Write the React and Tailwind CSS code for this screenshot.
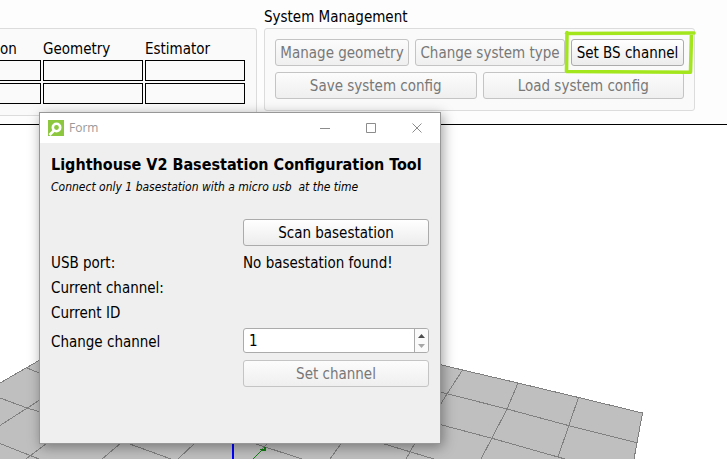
import { useState } from "react";

const BUTTON =
  "h-[27px] rounded-[3px] border border-[#ababab] bg-linear-to-b from-white to-[#ececec] pt-0.5 text-center leading-[23px] whitespace-nowrap text-black disabled:border-[#c4c4c4] disabled:from-[#fcfcfc] disabled:to-[#efefef] disabled:text-[#787878]";

function StatusTable() {
  const cell = "h-[21px] border border-black p-0";
  return (
    <div className="h-[88px] w-[257px] shrink-0 rounded-tr-[3px] rounded-br-[3px] border border-l-0 border-[#dcdcdc] bg-[#fafafa] pt-[9px]">
      <table className="-mt-0.5 w-[247px] table-fixed border-separate border-spacing-x-0.5 border-spacing-y-0.5 -ml-0.5">
        <colgroup>
          <col className="w-[41px]" />
          <col className="w-[100px]" />
          <col className="w-[100px]" />
        </colgroup>
        <thead>
          <tr className="h-5 text-left leading-[18px]">
            <th className="p-0 pt-0.5 font-normal">on</th>
            <th className="p-0 pt-0.5 font-normal">Geometry</th>
            <th className="p-0 pt-0.5 font-normal">Estimator</th>
          </tr>
        </thead>
        <tbody>
          <tr>
            <td className={cell + " border-l-0"} />
            <td className={cell} />
            <td className={cell} />
          </tr>
          <tr>
            <td className={cell + " border-l-0"} />
            <td className={cell} />
            <td className={cell} />
          </tr>
        </tbody>
      </table>
    </div>
  );
}

function SystemManagement() {
  return (
    <section className="w-[431px] shrink-0">
      <h2 className="h-5 leading-5">System Management</h2>
      <div className="mt-px flex flex-col gap-1.5 rounded-[3px] border border-[#dcdcdc] bg-[#fafafa] px-2.5 pt-2.5 pb-[11px]">
        <div className="flex gap-1.5">
          <button disabled className={BUTTON + " w-[134px]"}>Manage geometry</button>
          <button disabled className={BUTTON + " w-[150px]"}>Change system type</button>
          <div className="relative flex-1">
            <button className={BUTTON + " w-full"}>Set BS channel</button>
            <svg
              className="pointer-events-none absolute -top-2.5 -left-2 h-[46px] w-[134px]"
              viewBox="0 0 134 46"
              fill="none"
              stroke="#a2e61b"
              strokeWidth="3.6"
              strokeLinecap="round"
            >
              <path d="M4 3.500L3.500 42.500M3.500 4.500L131 4M128.500 4.500L127.500 43M3.500 42.500L127.500 43.300" />
            </svg>
          </div>
        </div>
        <div className="flex gap-1.5">
          <button disabled className={BUTTON + " flex-1"}>Save system config</button>
          <button disabled className={BUTTON + " flex-1"}>Load system config</button>
        </div>
      </div>
    </section>
  );
}

function Scene() {
  return (
    <div className="relative flex-1 overflow-hidden bg-white">
      <svg
        className="block h-[334px] w-[727px]"
        viewBox="0 125 727 334"
        fill="none"
        stroke="#808080"
        shapeRendering="crispEdges"
      >
        <path d="M0 383L39 360.500L120 314L440 364.500L462.500 370L518 383L578.500 397.500L642.500 413L634 459H0Z" fill="#bfbfbf" stroke="none" />
        <path d="M0 383L39 360.500M440 364.500L462.500 370L518 383L578.500 397.500L642.500 413L634 459" />
        <path d="M440 392L506 408.700L569 425.700L637 442.700M440 424.500L492 438.300L558 457L565 459" />
        <path d="M462.500 370L447 394L440 405M518 383L507 409L492 438L481 459M578.500 397.500L569 425L558 457" />
        <path d="M415 443L406 459M381 443L434 459M341.500 443L330 459M253 443L302 459M268 443L262 449" />
        <path d="M27 368L39 373M0 398L27 408L39 411.500M0 425.500L39 400.500M0 443.500L39 459M47 443L26 459M121 443L102 459M195 443L178 459M127 443L171 459" />
        <path d="M233 440V459" stroke="#0000ff" strokeWidth="2" />
        <path d="M253 459L263 449M260 449H264V447H265V450H262V451" stroke="#128012" />
      </svg>
    </div>
  );
}

function Titlebar() {
  return (
    <header className="flex h-[30px] items-center bg-white pl-2">
      <svg className="h-4 w-4" viewBox="0 0 16 16">
        <rect width="16" height="16" fill="#8dc63f" />
        <circle cx="8.500" cy="7.500" r="3.700" fill="none" stroke="#fff" strokeWidth="2.600" />
        <path d="M6 10.500L1.500 15" stroke="#fff" strokeWidth="2.600" />
      </svg>
      <span className="ml-[5px] flex-1 font-['Open_Sans','Noto_Sans',sans-serif] text-xs text-[#999]">Form</span>
      <div className="flex">
        {[
          ["Minimize", "M0 5.500H10"],
          ["Maximize", "M0.500 0.500H9.500V9.500H0.500Z"],
          ["Close", "M0.500 0.500L9.500 9.500M9.500 0.500L0.500 9.500"],
        ].map(([label, d]) => (
          <button key={label} aria-label={label} className="flex h-[30px] w-[46px] items-center justify-center">
            <svg className="h-2.5 w-2.5" viewBox="0 0 10 10" fill="none" stroke="#8c8c8c">
              <path d={d} />
            </svg>
          </button>
        ))}
      </div>
    </header>
  );
}

function ChannelInput() {
  const [value, setValue] = useState(1);
  return (
    <div className="flex h-[25px] overflow-hidden rounded-[3px] border border-[#ababab] bg-white">
      <input
        id="channel"
        type="number"
        min="1"
        max="16"
        value={value}
        onChange={(e) => setValue(Number(e.target.value))}
        className="min-w-0 flex-1 appearance-none pt-0.5 pl-[5px] leading-[21px] outline-none [-moz-appearance:textfield] [&::-webkit-inner-spin-button]:appearance-none"
      />
      <div className="flex w-[14px] flex-col border-l border-[#ababab] bg-[#fafafa]">
        <button
          aria-label="Increase channel"
          onClick={() => setValue(Math.min(16, value + 1))}
          className="flex flex-1 items-end justify-center pb-[3px]"
        >
          <svg className="h-1 w-[7px]" viewBox="0 0 7 4"><path d="M0 4L3.500 0L7 4Z" fill="#4d4d4d" /></svg>
        </button>
        <button
          aria-label="Decrease channel"
          disabled={value <= 1}
          onClick={() => setValue(value - 1)}
          className="flex flex-1 items-start justify-center pt-[3px]"
        >
          <svg className="h-1 w-[7px]" viewBox="0 0 7 4"><path d="M0 0L3.500 4L7 0Z" fill="#a6a6a6" /></svg>
        </button>
      </div>
    </div>
  );
}

function BasestationDialog() {
  return (
    <div
      role="dialog"
      aria-label="Form"
      className="absolute top-[112px] left-[39px] w-[402px] border border-[#979797] bg-[#efefef] shadow-[2px_3px_12px_rgba(0,0,0,0.38)]"
    >
      <Titlebar />
      <div className="px-[11px] pt-3 pb-14">
        <h1 className="text-base leading-5 font-bold whitespace-nowrap">Lighthouse V2 Basestation Configuration Tool</h1>
        <p className="mt-1 text-xs leading-4 whitespace-pre italic">Connect only 1 basestation with a micro usb  at the time</p>
        <div className="mt-6 grid grid-cols-[192px_1fr] items-center">
          <button className={BUTTON + " col-start-2"}>Scan basestation</button>
          <span className="mt-[5px] leading-[25px]">USB port:</span>
          <output className="mt-[5px] leading-[25px]">No basestation found!</output>
          <span className="col-span-2 leading-[25px]">Current channel:</span>
          <span className="col-span-2 leading-[25px]">Current ID</span>
          <label htmlFor="channel" className="mt-0.5 pt-1 leading-[21px]">Change channel</label>
          <div className="mt-0.5"><ChannelInput /></div>
          <button disabled className={BUTTON + " col-start-2 mt-[7px]"}>Set channel</button>
        </div>
      </div>
    </div>
  );
}

export default function App() {
  return (
    <main className="relative flex min-h-screen flex-col overflow-hidden bg-white font-['DejaVu_Sans_Condensed','DejaVu_Sans',sans-serif] text-[15px] text-black">
      <div className="flex h-[125px] border-b border-black bg-[#fdfdfd]">
        <div className="pt-7">
          <StatusTable />
        </div>
        <div className="ml-[7px] pt-[7px]">
          <SystemManagement />
        </div>
      </div>
      <Scene />
      <BasestationDialog />
    </main>
  );
}
